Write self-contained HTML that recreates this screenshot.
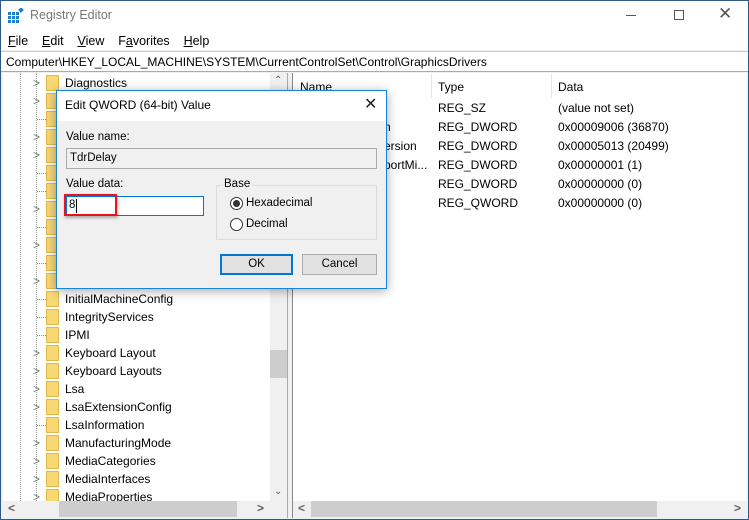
<!DOCTYPE html>
<html><head><style>
*{margin:0;padding:0;box-sizing:border-box}
body{width:749px;height:520px;overflow:hidden;background:#fff;font-family:"Liberation Sans",sans-serif;font-size:12px;color:#000;position:relative}
.a{position:absolute}
.win{left:0;top:0;width:749px;height:520px;border:1px solid #2b5a86;background:#f0f0f0}
.row{position:absolute;left:0;height:18px;width:270px}
.row .t{position:absolute;left:62px;top:2px;white-space:nowrap}
.row .f{position:absolute;left:43px;top:1px;width:13px;height:16px;background:#f8d775;border:1px solid #e2b949;border-top-right-radius:1px}
.row .e{position:absolute;left:30px;top:2px;color:#777;font-size:12px}
.row .d{position:absolute;left:34px;top:9px;width:9px;border-top:1px dotted #888}
.rr{position:absolute;height:19px;white-space:nowrap}
</style></head><body>
<div class="a win"></div>
<div class="a" style="left:1px;top:1px;width:747px;height:29px;background:#fff"></div>
<svg class="a" style="left:8px;top:8px" width="16" height="16"><g fill="#1e7fd0"><rect x="0" y="4" width="3" height="3"/><rect x="4" y="4" width="3" height="3"/><rect x="8" y="4" width="3" height="3"/><rect x="0" y="8" width="3" height="3"/><rect x="4" y="8" width="3" height="3"/><rect x="8" y="8" width="3" height="3"/><rect x="0" y="12" width="3" height="3"/><rect x="4" y="12" width="3" height="3"/><rect x="8" y="12" width="3" height="3"/><rect x="11" y="0" width="4" height="4" transform="rotate(45 13 2)"/></g></svg>
<div class="a" style="left:30px;top:8px;font-size:12.5px;color:#777">Registry Editor</div>
<div class="a" style="left:626px;top:15px;width:10px;border-top:1px solid #555"></div>
<div class="a" style="left:674px;top:10px;width:10px;height:10px;border:1px solid #555"></div>
<div class="a" style="left:718px;top:4px;font-size:17px;color:#555">✕</div>
<div class="a" style="left:1px;top:30px;width:747px;height:20px;background:#fff"></div>
<div class="a" style="left:8px;top:34px;font-size:12.5px"><u>F</u>ile&nbsp;&nbsp;&nbsp;&nbsp;<u>E</u>dit&nbsp;&nbsp;&nbsp;&nbsp;<u>V</u>iew&nbsp;&nbsp;&nbsp;&nbsp;F<u>a</u>vorites&nbsp;&nbsp;&nbsp;&nbsp;<u>H</u>elp</div>
<div class="a" style="left:1px;top:51px;width:747px;height:21px;background:#fff;border-top:1px solid #ccc;border-bottom:1px solid #aaa"></div>
<div class="a" style="left:6px;top:55px">Computer\HKEY_LOCAL_MACHINE\SYSTEM\CurrentControlSet\Control\GraphicsDrivers</div>
<div class="a" style="left:3px;top:73px;width:284px;height:444px;background:#fff;overflow:hidden">
<div class="a" style="left:17px;top:0;height:430px;border-left:1px dotted #999"></div>
<div class="a" style="left:33px;top:0;height:430px;border-left:1px dotted #999"></div>
<div id="tree"></div>
</div>
<div class="a" style="left:270px;top:73px;width:17px;height:428px;background:#f0f0f0"></div>
<div class="a" style="left:274px;top:75px;color:#606060;font-size:10px">⌃</div>
<div class="a" style="left:270px;top:350px;width:17px;height:28px;background:#cdcdcd"></div>
<div class="a" style="left:274px;top:486px;color:#606060;font-size:10px">⌄</div>
<div class="a" style="left:3px;top:501px;width:284px;height:16px;background:#f0f0f0"></div>
<div class="a" style="left:59px;top:501px;width:178px;height:16px;background:#cdcdcd"></div>
<div class="a" style="left:8px;top:501px;color:#606060;font-weight:bold">&lt;</div>
<div class="a" style="left:257px;top:501px;color:#606060;font-weight:bold">&gt;</div>
<div class="a" style="left:287px;top:73px;width:6px;height:445px;background:#f0f0f0;border-left:1px solid #aaa;border-right:1px solid #888"></div>
<div class="a" style="left:293px;top:73px;width:454px;height:444px;background:#fff"></div>
<div class="a" style="left:300px;top:80px">Name</div>
<div class="a" style="left:431px;top:74px;height:24px;border-left:1px solid #e5e5e5"></div>
<div class="a" style="left:438px;top:80px">Type</div>
<div class="a" style="left:551px;top:74px;height:24px;border-left:1px solid #e5e5e5"></div>
<div class="a" style="left:558px;top:80px">Data</div>
<div class="rr" style="left:438px;top:101px">REG_SZ</div><div class="rr" style="left:558px;top:101px">(value not set)</div>
<div class="rr" style="left:384px;top:120px">n</div><div class="rr" style="left:438px;top:120px">REG_DWORD</div><div class="rr" style="left:558px;top:120px">0x00009006 (36870)</div>
<div class="rr" style="left:384px;top:139px">ersion</div><div class="rr" style="left:438px;top:139px">REG_DWORD</div><div class="rr" style="left:558px;top:139px">0x00005013 (20499)</div>
<div class="rr" style="left:384px;top:158px">portMi...</div><div class="rr" style="left:438px;top:158px">REG_DWORD</div><div class="rr" style="left:558px;top:158px">0x00000001 (1)</div>
<div class="rr" style="left:438px;top:177px">REG_DWORD</div><div class="rr" style="left:558px;top:177px">0x00000000 (0)</div>
<div class="rr" style="left:438px;top:196px">REG_QWORD</div><div class="rr" style="left:558px;top:196px">0x00000000 (0)</div>
<div class="a" style="left:293px;top:501px;width:454px;height:16px;background:#f0f0f0"></div>
<div class="a" style="left:311px;top:501px;width:346px;height:16px;background:#cdcdcd"></div>
<div class="a" style="left:298px;top:501px;color:#606060;font-weight:bold">&lt;</div>
<div class="a" style="left:734px;top:501px;color:#606060;font-weight:bold">&gt;</div>
<div class="a" style="left:56px;top:90px;width:331px;height:199px;background:#f0f0f0;border:1px solid #1883d7;box-shadow:0 2px 10px rgba(0,0,0,.35)"></div>
<div class="a" style="left:57px;top:91px;width:329px;height:30px;background:#fff"></div>
<div class="a" style="left:65px;top:98px;font-size:12px">Edit QWORD (64-bit) Value</div>
<div class="a" style="left:364px;top:94px;font-size:16px;color:#222">✕</div>
<div class="a" style="left:66px;top:131px;font-size:11.5px">Value name:</div>
<div class="a" style="left:66px;top:148px;width:311px;height:21px;background:#f0f0f0;border:1px solid #aaa"></div>
<div class="a" style="left:70px;top:152px;font-size:11.5px">TdrDelay</div>
<div class="a" style="left:66px;top:178px;font-size:11.5px">Value data:</div>
<div class="a" style="left:66px;top:196px;width:138px;height:20px;background:#fff;border:1px solid #0078d7"></div>
<div class="a" style="left:69px;top:199px;font-size:11.5px">8</div>
<div class="a" style="left:76px;top:199px;height:14px;border-left:1px solid #000"></div>
<div class="a" style="left:64px;top:194px;width:53px;height:22px;border:2px solid #e8141c;box-shadow:1px 2px 3px rgba(0,0,0,.3)"></div>
<div class="a" style="left:216px;top:185px;width:161px;height:55px;border:1px solid #dcdcdc"></div>
<div class="a" style="left:222px;top:178px;padding:0 2px;background:#f0f0f0;font-size:11.5px">Base</div>
<div class="a" style="left:230px;top:197px;width:13px;height:13px;border-radius:50%;border:1px solid #333;background:#fff"></div>
<div class="a" style="left:233px;top:200px;width:7px;height:7px;border-radius:50%;background:#333"></div>
<div class="a" style="left:246px;top:197px;font-size:11.5px">Hexadecimal</div>
<div class="a" style="left:230px;top:218px;width:13px;height:13px;border-radius:50%;border:1px solid #333;background:#fff"></div>
<div class="a" style="left:246px;top:218px;font-size:11.5px">Decimal</div>
<div class="a" style="left:220px;top:254px;width:73px;height:21px;background:#e1e1e1;border:2px solid #0078d7;text-align:center;line-height:17px;font-size:11.5px">OK</div>
<div class="a" style="left:302px;top:254px;width:75px;height:21px;background:#e1e1e1;border:1px solid #adadad;text-align:center;line-height:19px;font-size:11.5px">Cancel</div>
<script>
var names=["Diagnostics","","","","","","","","","","","","InitialMachineConfig","IntegrityServices","IPMI","Keyboard Layout","Keyboard Layouts","Lsa","LsaExtensionConfig","LsaInformation","ManufacturingMode","MediaCategories","MediaInterfaces","MediaProperties"];
var exp=[1,1,0,1,1,0,0,1,0,1,0,1,0,0,0,1,1,1,1,0,1,1,1,1];
var h="";
for(var i=0;i<names.length;i++){
 h+='<div class="row" style="top:'+(i*18+1)+'px">'+(exp[i]?'<span class="e">&gt;</span>':'<span class="d"></span>')+'<span class="f"></span><span class="t">'+names[i]+'</span></div>';
}
document.getElementById("tree").innerHTML=h;
</script>
</body></html>
